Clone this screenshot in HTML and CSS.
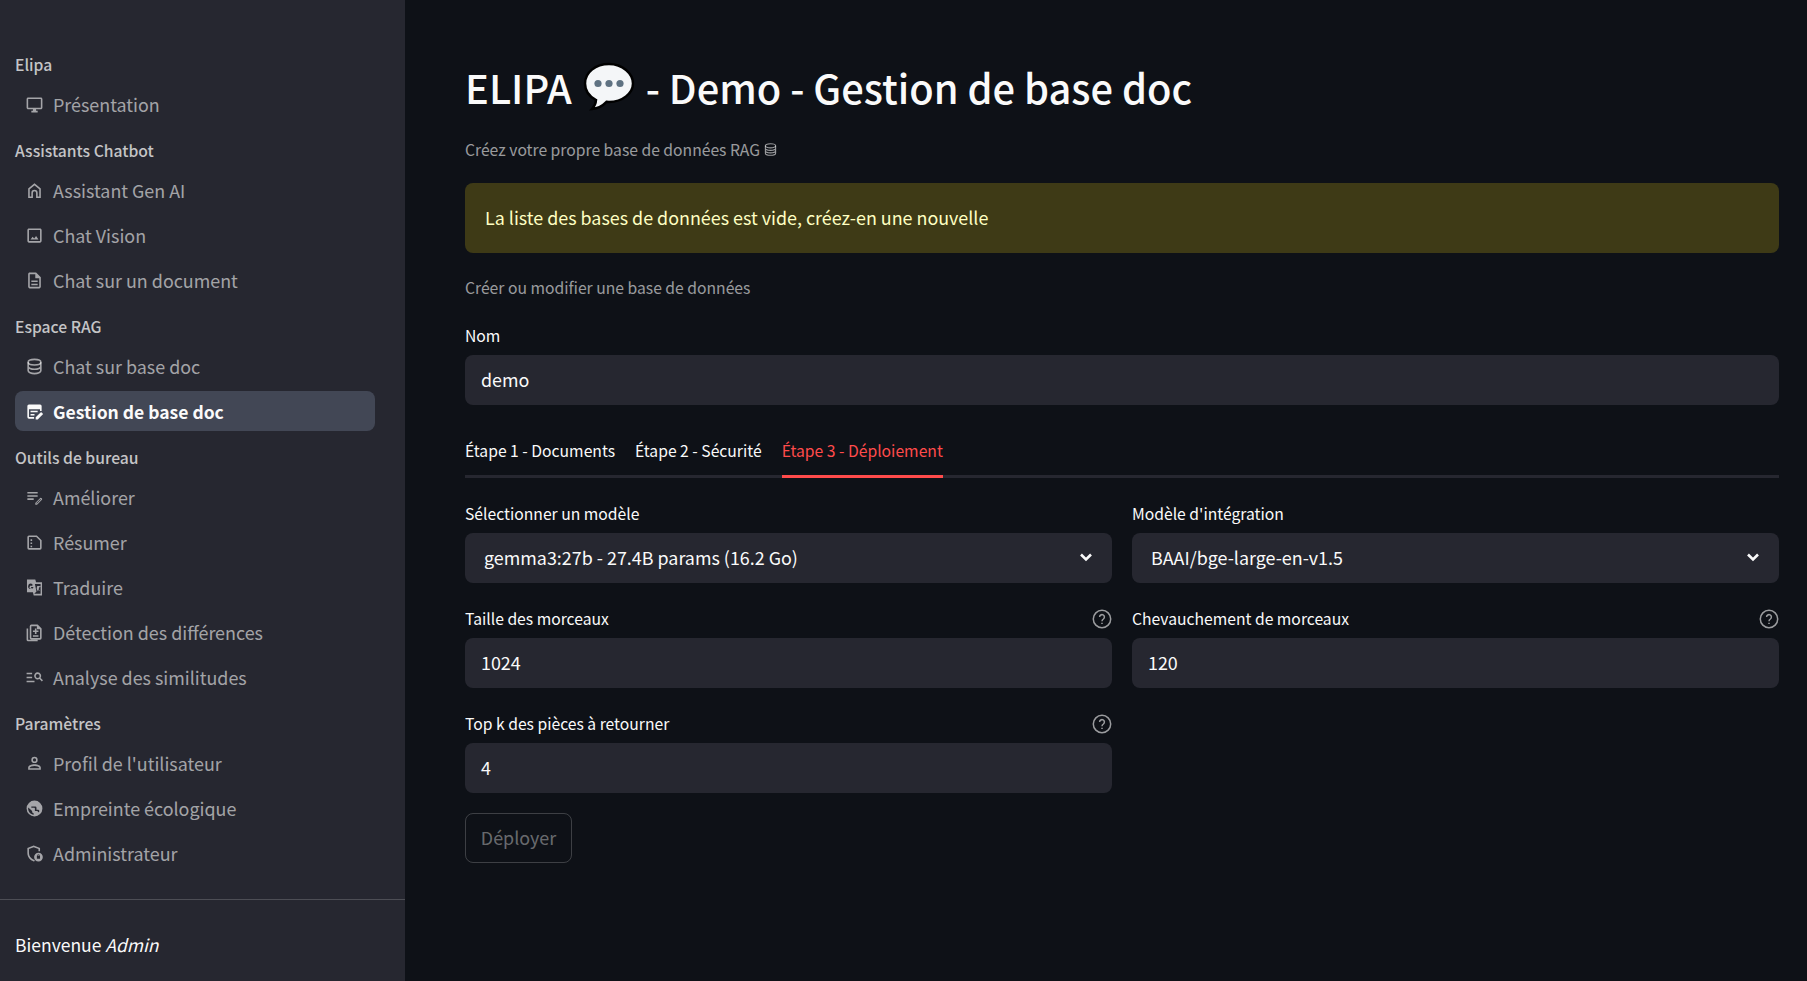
FILE: index.html
```html
<!DOCTYPE html>
<html lang="fr">
<head>
  <meta charset="UTF-8">
  <meta name="viewport" content="width=device-width, initial-scale=1.0">
  <title>Gestion de base doc</title>
  <link rel="stylesheet" href="styles.css">
</head>
<body>
  <div class="wrapper">
    <aside class="sidebar">
      <nav class="nav">
        <div class="nav-section">Elipa</div>
        <a class="nav-item">
          <svg class="nav-icon" viewBox="0 0 24 24"><path d="M20 3H4c-1.1 0-2 .9-2 2v11c0 1.1.9 2 2 2h6v2H8v2h8v-2h-2v-2h6c1.1 0 2-.9 2-2V5c0-1.1-.9-2-2-2zm0 13H4V5h16v11z"/></svg>
          Présentation
        </a>

        <div class="nav-section">Assistants Chatbot</div>
        <a class="nav-item">
          <svg class="nav-icon line" viewBox="0 0 24 24"><path d="M5 20.5V10l7-5.8 7 5.8v10.5h-4V15a3 3 0 0 0-6 0v5.5z"/></svg>
          Assistant Gen AI
        </a>
        <a class="nav-item">
          <svg class="nav-icon" viewBox="0 0 24 24"><path d="M19 5v14H5V5h14m0-2H5c-1.1 0-2 .9-2 2v14c0 1.1.9 2 2 2h14c1.1 0 2-.9 2-2V5c0-1.1-.9-2-2-2z"/><path d="M7 17l2.6-3.5 2 2.4 2.4-3.2 3 4.3z"/></svg>
          Chat Vision
        </a>
        <a class="nav-item">
          <svg class="nav-icon" viewBox="0 0 24 24"><path d="M8 16h8v2H8zm0-4h8v2H8zm6-10H6c-1.1 0-2 .9-2 2v16c0 1.1.89 2 1.99 2H18c1.1 0 2-.9 2-2V8l-6-6zm4 18H6V4h7v5h5v11z"/></svg>
          Chat sur un document
        </a>

        <div class="nav-section">Espace RAG</div>
        <a class="nav-item">
          <svg class="nav-icon line" viewBox="0 0 24 24"><ellipse cx="12" cy="6.5" rx="8" ry="3.5"/><path d="M4 6.5v11c0 1.9 3.6 3.5 8 3.5s8-1.600 8-3.500v-11M4 12c0 1.900 3.600 3.500 8 3.500s8-1.600 8-3.500"/></svg>
          Chat sur base doc
        </a>
        <a class="nav-item active">
          <svg class="nav-icon" viewBox="0 0 24 24"><path d="M5 3h14a2 2 0 0 1 2 2v6.500h-2V9H5v10h6.500v2H5a2 2 0 0 1-2-2V5a2 2 0 0 1 2-2z"/><path d="M7 11h9v2H7zM7 15h5v2H7z"/><path d="M13.500 22v-2.600l6.200-6.200a1 1 0 0 1 1.400 0l1.200 1.200a1 1 0 0 1 0 1.400L16.100 22z"/></svg>
          Gestion de base doc
        </a>

        <div class="nav-section">Outils de bureau</div>
        <a class="nav-item">
          <svg class="nav-icon" viewBox="0 0 24 24"><path d="M3 5h13v2H3zM3 9h13v2H3zM3 13h8v2H3z"/><path d="M13 21v-2.200l6.200-6.200a1 1 0 0 1 1.400 0l.8.8a1 1 0 0 1 0 1.400L15.200 21zm1.500-1.500h.6l5-5-.6-.6-5 5z"/></svg>
          Améliorer
        </a>
        <a class="nav-item">
          <svg class="nav-icon" viewBox="0 0 24 24"><path d="M5 3h10l6 6v10a2 2 0 0 1-2 2H5a2 2 0 0 1-2-2V5a2 2 0 0 1 2-2zm0 2v14h14v-9.200L14.200 5z"/><path d="M7 8h2v2H7zM7 12h2v2H7zM7 16h2v2H7z"/></svg>
          Résumer
        </a>
        <a class="nav-item">
          <svg class="nav-icon" viewBox="0 0 24 24"><path d="M2.500 2H13l1 3.500h7.500v16.500H11l-1-4H2.500zm10 5.500 2 9.500-2.800 3h8V7.500zM15.500 10h4v1h-1.200q-.4 2-1.300 3.200l1.500 1.500-.6.7-1.600-1.500-.6 2-1-4zM7.500 7a3.500 3.500 0 1 0 3.300 4.500H7.700v1.500h1.500a2 2 0 1 1-.5-3l1.100-1.100A3.500 3.500 0 0 0 7.500 7z" fill-rule="evenodd"/></svg>
          Traduire
        </a>
        <a class="nav-item">
          <svg class="nav-icon" viewBox="0 0 24 24"><path d="M4 7H2v14a2 2 0 0 0 2 2h12v-2H4z"/><path d="M8 2h8l5 5v12a2 2 0 0 1-2 2H8a2 2 0 0 1-2-2V4a2 2 0 0 1 2-2zm0 2v15h11V8h-4V4z"/><path d="M12.500 7h2v2.500H17v2h-2.500V14h-2v-2.500H10v-2h2.500zM10 15.500h7v2h-7z"/></svg>
          Détection des différences
        </a>
        <a class="nav-item">
          <svg class="nav-icon" viewBox="0 0 24 24"><path d="M2 6h7v2H2zM2 11h7v2H2zM2 16h10v2H2z"/><path d="M16 5.500a4.500 4.500 0 0 1 3.700 7l3 3-1.400 1.400-3-3A4.500 4.500 0 1 1 16 5.500zm0 2a2.500 2.500 0 1 0 0 5 2.500 2.500 0 0 0 0-5z"/></svg>
          Analyse des similitudes
        </a>

        <div class="nav-section">Paramètres</div>
        <a class="nav-item">
          <svg class="nav-icon" viewBox="0 0 24 24"><path d="M12 3.500a4 4 0 1 1 0 8 4 4 0 0 1 0-8zm0 2a2 2 0 1 0 0 4 2 2 0 0 0 0-4zM12 13c4 0 8 1.600 8 4.200V20H4v-2.800C4 14.600 8 13 12 13zm0 2c-3 0-6 1.200-6 2.200v.8h12v-.8c0-1-3-2.200-6-2.200z"/></svg>
          Profil de l'utilisateur
        </a>
        <a class="nav-item">
          <svg class="nav-icon" viewBox="0 0 24 24"><path fill-rule="evenodd" d="M12 2a10 10 0 1 0 0 20 10 10 0 0 0 0-20zM4.100 10.800 9 15v1c0 1.100.9 2 2 2v2c-4-.5-7-4-7-8 0-.4 0-.8.100-1.200zM8 9.500h5a1.500 1.500 0 0 1 1.500 1.500v2.500H16c1 0 1.900.6 2.300 1.500l-.9 1.600h-.6c-.4-.9-1-1.400-1.800-1.400h-2.500V11.800c0-.4-.3-.7-.7-.7H8z"/></svg>
          Empreinte écologique
        </a>
        <a class="nav-item">
          <svg class="nav-icon" viewBox="0 0 24 24"><path d="M11 2 3 5v6.500c0 4.900 3.300 9.300 8 10.500.5-.1 1-.3 1.500-.5l-1-1.800-.5.2c-3.500-1.200-6-4.700-6-8.400V6.400l6-2.200 6 2.200V9h2V5z"/><path d="M17 11a5.500 5.500 0 1 1 0 11 5.500 5.500 0 0 1 0-11zm0 1.800a1.300 1.300 0 0 0-1.300 1.300v.7H15v3.800h4v-3.800h-.7v-.7a1.300 1.300 0 0 0-1.300-1.300zm0 .9c.3 0 .5.200.5.400v.7h-1v-.7c0-.2.200-.4.500-.4z" fill-rule="evenodd"/></svg>
          Administrateur
        </a>
      </nav>
      <div class="sidebar-footer">Bienvenue <em>Admin</em></div>
    </aside>

    <main class="main">
      <h1 class="title">ELIPA
        <svg class="title-emoji" viewBox="0 0 52 52"><path d="M26 3C12.500 3 2 11.500 2 22.500c0 7 4.300 13 11 16.500-.2 3.500-1.700 6.500-4 9 5.500-.5 11-3.500 14.500-7.200q1.200.1 2.500.1c13.500 0 24-8.600 24-18.400S39.500 3 26 3z" fill="#f4f6f8" stroke="#000" stroke-width="2.500"/><circle cx="15" cy="22.500" r="3.600" fill="#5f7282"/><circle cx="26" cy="22.500" r="3.600" fill="#5f7282"/><circle cx="37" cy="22.500" r="3.600" fill="#5f7282"/></svg>
        - Demo - Gestion de base doc</h1>
      <p class="caption">Créez votre propre base de données RAG
        <svg class="caption-icon" viewBox="0 0 14 14"><ellipse cx="7" cy="3" rx="5.500" ry="2.200"/><path d="M1.500 3v8c0 1.200 2.500 2.200 5.500 2.200s5.500-1 5.500-2.200V3M1.500 5.700c0 1.200 2.500 2.200 5.500 2.200s5.500-1 5.500-2.200M1.500 8.400c0 1.200 2.500 2.200 5.500 2.200s5.500-1 5.500-2.200"/></svg>
      </p>

      <div class="alert">La liste des bases de données est vide, créez-en une nouvelle</div>

      <p class="caption form-title">Créer ou modifier une base de données</p>

      <div class="field">
        <div class="field-label">Nom</div>
        <div class="box">demo</div>
      </div>

      <div class="tabs">
        <div class="tab">Étape 1 - Documents</div>
        <div class="tab">Étape 2 - Sécurité</div>
        <div class="tab active">Étape 3 - Déploiement</div>
      </div>

      <div class="form-grid">
        <div class="field">
          <div class="field-label">Sélectionner un modèle</div>
          <div class="box select">
            gemma3:27b - 27.4B params (16.2 Go)
            <svg class="chevron" viewBox="0 0 16 16"><path d="M3 5.500l5 5 5-5"/></svg>
          </div>
        </div>
        <div class="field">
          <div class="field-label">Modèle d'intégration</div>
          <div class="box select">
            BAAI/bge-large-en-v1.5
            <svg class="chevron" viewBox="0 0 16 16"><path d="M3 5.500l5 5 5-5"/></svg>
          </div>
        </div>
        <div class="field">
          <div class="field-label">Taille des morceaux
            <svg class="help" viewBox="0 0 20 20"><circle cx="10" cy="10" r="8.700"/><path d="M7.600 8a2.400 2.400 0 1 1 3.800 2c-.9.600-1.400 1.100-1.400 2.200M10 13.700v1.400"/></svg>
          </div>
          <div class="box">1024</div>
        </div>
        <div class="field">
          <div class="field-label">Chevauchement de morceaux
            <svg class="help" viewBox="0 0 20 20"><circle cx="10" cy="10" r="8.700"/><path d="M7.600 8a2.400 2.400 0 1 1 3.800 2c-.9.600-1.400 1.100-1.400 2.200M10 13.700v1.400"/></svg>
          </div>
          <div class="box">120</div>
        </div>
        <div class="field">
          <div class="field-label">Top k des pièces à retourner
            <svg class="help" viewBox="0 0 20 20"><circle cx="10" cy="10" r="8.700"/><path d="M7.600 8a2.400 2.400 0 1 1 3.800 2c-.9.600-1.400 1.100-1.400 2.200M10 13.700v1.400"/></svg>
          </div>
          <div class="box">4</div>
        </div>
      </div>

      <button class="btn" disabled>Déployer</button>
    </main>
  </div>
</body>
</html>
```

FILE: styles.css
```css
body {
  margin: 0;
  font-family: "Noto Sans CJK JP", "Noto Sans", sans-serif;
  background: #0e1117;
  color: #fafafa;
}

.wrapper {
  display: flex;
  height: 100vh;
  overflow: hidden;
}

/* sidebar */
.sidebar {
  width: 405px;
  flex-shrink: 0;
  display: flex;
  flex-direction: column;
  background: #262730;
}

.nav {
  flex: 1;
  padding: 52px 30px 0 15px;
  border-bottom: 1px solid #4d4e55;
}

.nav-section {
  height: 24px;
  line-height: 26px;
  margin: 14px 0 8px;
  font-size: 15.7px;
  font-weight: 500;
  color: rgba(250, 250, 250, 0.75);
}

.nav-section:first-child {
  margin-top: 0;
}

.nav-item {
  display: flex;
  align-items: center;
  gap: 9px;
  height: 40px;
  margin-bottom: 5px;
  padding-left: 10px;
  border-radius: 8px;
  font-size: 17.9px;
  color: rgba(250, 250, 250, 0.6);
}

.nav-item:last-child {
  margin-bottom: 0;
}

.nav-item.active {
  background: rgba(151, 166, 195, 0.25);
  color: #fafafa;
  font-size: 17.5px;
  font-weight: 600;
}

.nav-icon {
  width: 19px;
  height: 19px;
  flex-shrink: 0;
  fill: currentColor;
}

.nav-icon.line {
  fill: none;
  stroke: currentColor;
  stroke-width: 2;
}

.sidebar-footer {
  height: 81px;
  padding: 31px 15px 0;
  box-sizing: border-box;
  font-size: 17.5px;
  line-height: 28px;
  color: #fafafa;
}

/* main content */
.main {
  flex: 1;
  min-width: 0;
  padding: 59px 28px 0 60px;
}

.title {
  display: flex;
  align-items: center;
  gap: 11px;
  height: 56px;
  margin: 0;
  font-size: 39.8px;
  line-height: 56px;
  font-weight: 500;
}

.title-emoji {
  width: 52px;
  height: 52px;
}

.caption {
  display: flex;
  align-items: center;
  gap: 4px;
  height: 22px;
  margin: 23px 0 0;
  padding-top: 1px;
  box-sizing: border-box;
  font-size: 15.7px;
  line-height: 22px;
  color: rgba(250, 250, 250, 0.6);
}

.caption-icon {
  width: 13px;
  height: 13px;
  fill: none;
  stroke: currentColor;
  stroke-width: 1.2;
}

.alert {
  height: 70px;
  margin-top: 23px;
  padding: 0 20px;
  border-radius: 8px;
  background: rgba(255, 227, 18, 0.2);
  color: #ffffc2;
  font-size: 17.9px;
  line-height: 68px;
}

.form-title {
  margin-top: 23px;
}

.form-title + .field {
  margin-top: 27px;
}

.field-label {
  display: flex;
  justify-content: space-between;
  align-items: center;
  height: 20px;
  margin-bottom: 10px;
  padding-top: 1px;
  box-sizing: border-box;
  font-size: 15.7px;
  line-height: 20px;
}

.box {
  display: flex;
  align-items: center;
  height: 50px;
  padding: 0 16px 2px;
  box-sizing: border-box;
  border-radius: 8px;
  background: #262730;
  font-size: 17.9px;
}

.select {
  justify-content: space-between;
  padding: 0 18px 2px 19px;
}

.chevron {
  width: 16px;
  height: 16px;
  fill: none;
  stroke: #fafafa;
  stroke-width: 2.6;
}

.help {
  width: 20px;
  height: 20px;
  fill: none;
  stroke: rgba(250, 250, 250, 0.6);
  stroke-width: 1.500;
}

.tabs {
  display: flex;
  gap: 20px;
  margin-top: 29px;
  border-bottom: 3px solid #262730;
}

.tab {
  height: 41px;
  margin-bottom: -3px;
  padding-bottom: 3px;
  font-size: 15.7px;
  line-height: 34px;
  box-sizing: content-box;
}

.tab.active {
  color: #ff4b4b;
  border-bottom: 3px solid #ff4b4b;
  padding-bottom: 0;
}

.form-grid {
  display: grid;
  grid-template-columns: 1fr 1fr;
  gap: 25px 20px;
  margin-top: 25px;
}

.btn {
  display: block;
  width: 107px;
  height: 50px;
  margin-top: 20px;
  padding: 0 0 2px;
  border: 1px solid rgba(250, 250, 250, 0.2);
  border-radius: 8px;
  background: transparent;
  color: rgba(250, 250, 250, 0.4);
  font-family: inherit;
  font-size: 17.9px;
}
```
